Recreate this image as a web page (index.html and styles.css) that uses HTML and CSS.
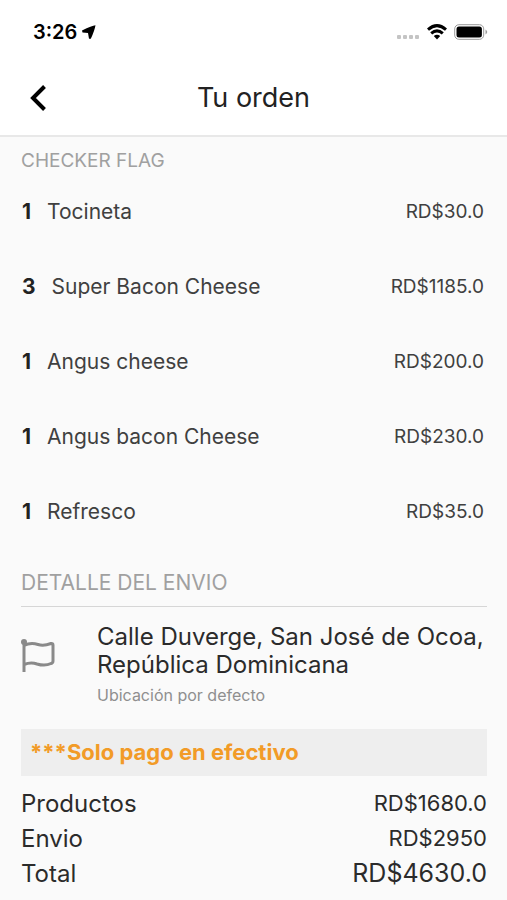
FILE: index.html
```html
<!DOCTYPE html>
<html lang="es">
<head>
<meta charset="utf-8">
<meta name="viewport" content="width=device-width, initial-scale=1">
<title>Tu orden</title>
<link rel="stylesheet" href="styles.css">
</head>
<body>
<header class="header">
  <div class="status">
    <div class="clock">
      <span>3:26</span>
      <svg class="location" viewBox="0 0 14 14" aria-hidden="true"><path d="M13.500 .3Q10 .6 0 5.600L.5 7.500 6 8 7 13.800 8.800 13.800Q12.500 6 13.500 .3Z"/></svg>
    </div>
    <div class="indicators">
      <svg class="signal" viewBox="0 0 24 6" aria-hidden="true"><rect x="1" y="1" width="4" height="4" rx="1"/><rect x="7" y="1" width="4" height="4" rx="1"/><rect x="13" y="1" width="4" height="4" rx="1"/><rect x="19" y="1" width="4" height="4" rx="1"/></svg>
      <svg class="wifi" viewBox="0 0 20 16" aria-hidden="true"><path class="wave" d="M1 5.600Q10-2.400 19 5.600M4.200 9.400Q10 4.400 15.800 9.400"/><path d="M6.800 12.100Q10 9.400 13.200 12.100L10 15.400Z"/></svg>
      <svg class="battery" viewBox="0 0 34 16" aria-hidden="true"><rect class="shell" x=".7" y=".7" width="29" height="14.600" rx="4.200"/><rect x="2.500" y="2.500" width="25.400" height="11" rx="2.500"/><path class="cap" d="M31.500 5.500Q35 8 31.500 10.500Z"/></svg>
    </div>
  </div>
  <nav class="bar">
    <button class="back" type="button" aria-label="Volver"><svg viewBox="0 0 16 28" aria-hidden="true"><path d="M14.500 2.500 3 14 14.500 25.500"/></svg></button>
    <h1 class="title">Tu orden</h1>
  </nav>
</header>
<main class="order">
  <section>
    <h2 class="store">CHECKER FLAG</h2>
    <ul class="items">
      <li class="item"><b>1</b><span class="name">Tocineta</span><span>RD$30.0</span></li>
      <li class="item"><b>3</b><span class="name">Super Bacon Cheese</span><span>RD$1185.0</span></li>
      <li class="item"><b>1</b><span class="name">Angus cheese</span><span>RD$200.0</span></li>
      <li class="item"><b>1</b><span class="name">Angus bacon Cheese</span><span>RD$230.0</span></li>
      <li class="item"><b>1</b><span class="name">Refresco</span><span>RD$35.0</span></li>
    </ul>
  </section>
  <section>
    <h2 class="detail">DETALLE DEL ENVIO</h2>
    <div class="address">
      <svg class="flag" viewBox="0 0 34 34" aria-hidden="true"><circle cx="3" cy="3" r="3"/><path d="M3 3V33M3 6.500C8 4 12 4 17 5.500C22 7 26 6 30 4.500Q32 4 32 6V22Q32 24 30 24.500C25 27 21 26.500 16 25C12 23.500 8 23.500 3 25.500"/></svg>
      <div>
        <p class="street">Calle Duverge, San José de Ocoa, República Dominicana</p>
        <p class="note">Ubicación por defecto</p>
      </div>
    </div>
  </section>
  <p class="notice">***Solo pago en efectivo</p>
  <dl class="totals">
    <div class="line"><dt>Productos</dt><dd>RD$1680.0</dd></div>
    <div class="line"><dt>Envio</dt><dd>RD$2950</dd></div>
    <div class="line"><dt>Total</dt><dd class="total">RD$4630.0</dd></div>
  </dl>
</main>
</body>
</html>
```
FILE: styles.css
```css
* { box-sizing: border-box; }
body {
  margin: 0;
  background: #fafafa;
  color: #2b2b2b;
  font-family: Inter, "Liberation Sans", sans-serif;
}
h1, h2, p, ul, dl, dd { margin: 0; padding: 0; font-weight: 400; }
.header { background: #fff; border-bottom: 2px solid #e8e8e8; }
.status {
  display: flex;
  justify-content: space-between;
  align-items: center;
  height: 60px;
  padding: 4px 19px 0 33px;
  color: #000;
}
.clock { display: flex; align-items: center; gap: 5px; font-size: 20px; font-weight: 600; }
.location { width: 14px; height: 14px; }
.indicators { display: flex; align-items: center; gap: 7px; }
.signal { width: 24px; height: 6px; fill: #c4c4c4; margin-top: 10px; }
.wifi { width: 20px; height: 16px; }
.wave { fill: none; stroke: #000; stroke-width: 3; }
.battery { width: 34px; height: 16px; }
.shell { fill: none; stroke: #999; stroke-width: 1; }
.cap { fill: #999; }
.bar {
  display: grid;
  grid-template-columns: 44px 1fr 44px;
  align-items: center;
  height: 75px;
  padding: 0 16px;
}
.back { display: flex; justify-content: center; padding: 0; border: 0; background: none; }
.back svg { width: 16px; height: 28px; fill: none; stroke: #000; stroke-width: 4; }
.title { font-size: 27px; color: #222; text-align: center; }
.order { padding: 11px 20px 0 21px; }
.store { font-size: 19px; line-height: 26px; color: #a0a0a0; }
.items { list-style: none; }
.item {
  display: flex;
  align-items: center;
  padding: 24px 3px 23px 1px;
  font-size: 19px;
  line-height: 28px;
  color: #404040;
}
.item b { margin-right: 16px; font-size: 21px; font-weight: 700; color: #222; }
.name { flex: 1; font-size: 21px; }
.detail {
  padding: 20px 0 9px;
  border-bottom: 1px solid #d6d6d6;
  font-size: 21px;
  line-height: 28px;
  color: #a0a0a0;
}
.address { display: flex; gap: 42px; padding: 16px 0 23px; }
.flag { flex: none; width: 34px; height: 34px; margin-top: 16px; fill: #8a8a8a; }
.flag path { fill: none; stroke: #8a8a8a; stroke-width: 3; }
.street { font-size: 24px; line-height: 28px; }
.note { margin-top: 5px; font-size: 16px; line-height: 22px; color: #8f8f8f; }
.notice {
  padding: 10px 9px;
  background: #eee;
  color: #f29b27;
  font-size: 22px;
  line-height: 27px;
  font-weight: 700;
}
.totals { padding-top: 10px; }
.line { display: flex; justify-content: space-between; align-items: center; font-size: 24px; line-height: 35px; }
.line dd { font-size: 22px; }
.line .total { font-size: 25px; }
```
